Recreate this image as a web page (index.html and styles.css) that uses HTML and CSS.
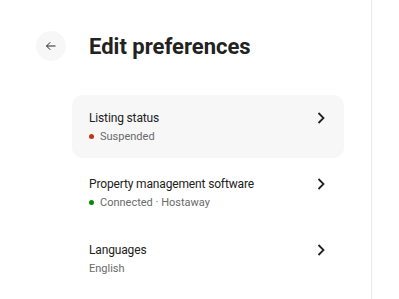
FILE: index.html
```html
<!DOCTYPE html>
<html lang="en">
<head>
    <meta charset="UTF-8">
    <meta name="viewport" content="width=device-width, initial-scale=1.0">
    <title>Edit preferences</title>
    <link rel="stylesheet" href="styles.css">
</head>
<body>
    <div class="page">
        <div class="main">
            <div class="header">
                <button class="back-btn" aria-label="Back">
                    <svg width="12" height="12" viewBox="0 0 32 32" fill="none" stroke="#222" stroke-width="2.6">
                        <path d="M28 16H4M14 6L4 16l10 10"/>
                    </svg>
                </button>
                <h1>Edit preferences</h1>
            </div>
            <div class="pref-list">
                <div class="pref-row active">
                    <div class="pref-text">
                        <div class="pref-title">Listing status</div>
                        <div class="pref-sub"><span class="dot red"></span>Suspended</div>
                    </div>
                    <svg class="chevron" width="8" height="12" viewBox="0 0 8 12" fill="none" stroke="#222" stroke-width="1.8">
                        <path d="M1.5 1l5 5-5 5"/>
                    </svg>
                </div>
                <div class="pref-row">
                    <div class="pref-text">
                        <div class="pref-title">Property management software</div>
                        <div class="pref-sub"><span class="dot green"></span>Connected · Hostaway</div>
                    </div>
                    <svg class="chevron" width="8" height="12" viewBox="0 0 8 12" fill="none" stroke="#222" stroke-width="1.8">
                        <path d="M1.5 1l5 5-5 5"/>
                    </svg>
                </div>
                <div class="pref-row">
                    <div class="pref-text">
                        <div class="pref-title">Languages</div>
                        <div class="pref-sub">English</div>
                    </div>
                    <svg class="chevron" width="8" height="12" viewBox="0 0 8 12" fill="none" stroke="#222" stroke-width="1.8">
                        <path d="M1.5 1l5 5-5 5"/>
                    </svg>
                </div>
            </div>
        </div>
    </div>
</body>
</html>
```

FILE: styles.css
```css
body {
    font-family: Roboto, "Liberation Sans", sans-serif;
    background-color: #fff;
    color: #222;
    margin: 0;
}

.page {
    display: flex;
    height: 299px;
}

.main {
    width: 372px;
    border-right: 1px solid #ebebeb;
    padding: 31px 0 0 36px;
    box-sizing: border-box;
}

.header {
    display: flex;
    align-items: center;
    gap: 23px;
}

.back-btn {
    width: 30px;
    height: 30px;
    border-radius: 50%;
    border: none;
    background-color: #f7f7f7;
    display: flex;
    align-items: center;
    justify-content: center;
    padding: 0;
    cursor: pointer;
}

.header h1 {
    margin: 0;
    font-size: 22px;
    font-weight: 700;
}

.pref-list {
    margin: 34px 0 0 36px;
    width: 272px;
    display: flex;
    flex-direction: column;
    gap: 3px;
}

.pref-row {
    height: 63px;
    padding: 0 19px 0 17px;
    display: flex;
    align-items: center;
    justify-content: space-between;
    border-radius: 10px;
}

.pref-row.active {
    background-color: #f7f7f7;
}

.chevron {
    align-self: flex-start;
    margin-top: 17px;
}

.pref-title {
    font-size: 12px;
    line-height: 17px;
    letter-spacing: -0.15px;
}

.pref-sub {
    font-size: 11px;
    line-height: 15px;
    color: #6a6a6a;
    margin-top: 2px;
    display: flex;
    align-items: center;
}

.dot {
    width: 5px;
    height: 5px;
    border-radius: 50%;
    margin-right: 6px;
}

.dot.red {
    background-color: #c13515;
}

.dot.green {
    background-color: #008a05;
}
```
